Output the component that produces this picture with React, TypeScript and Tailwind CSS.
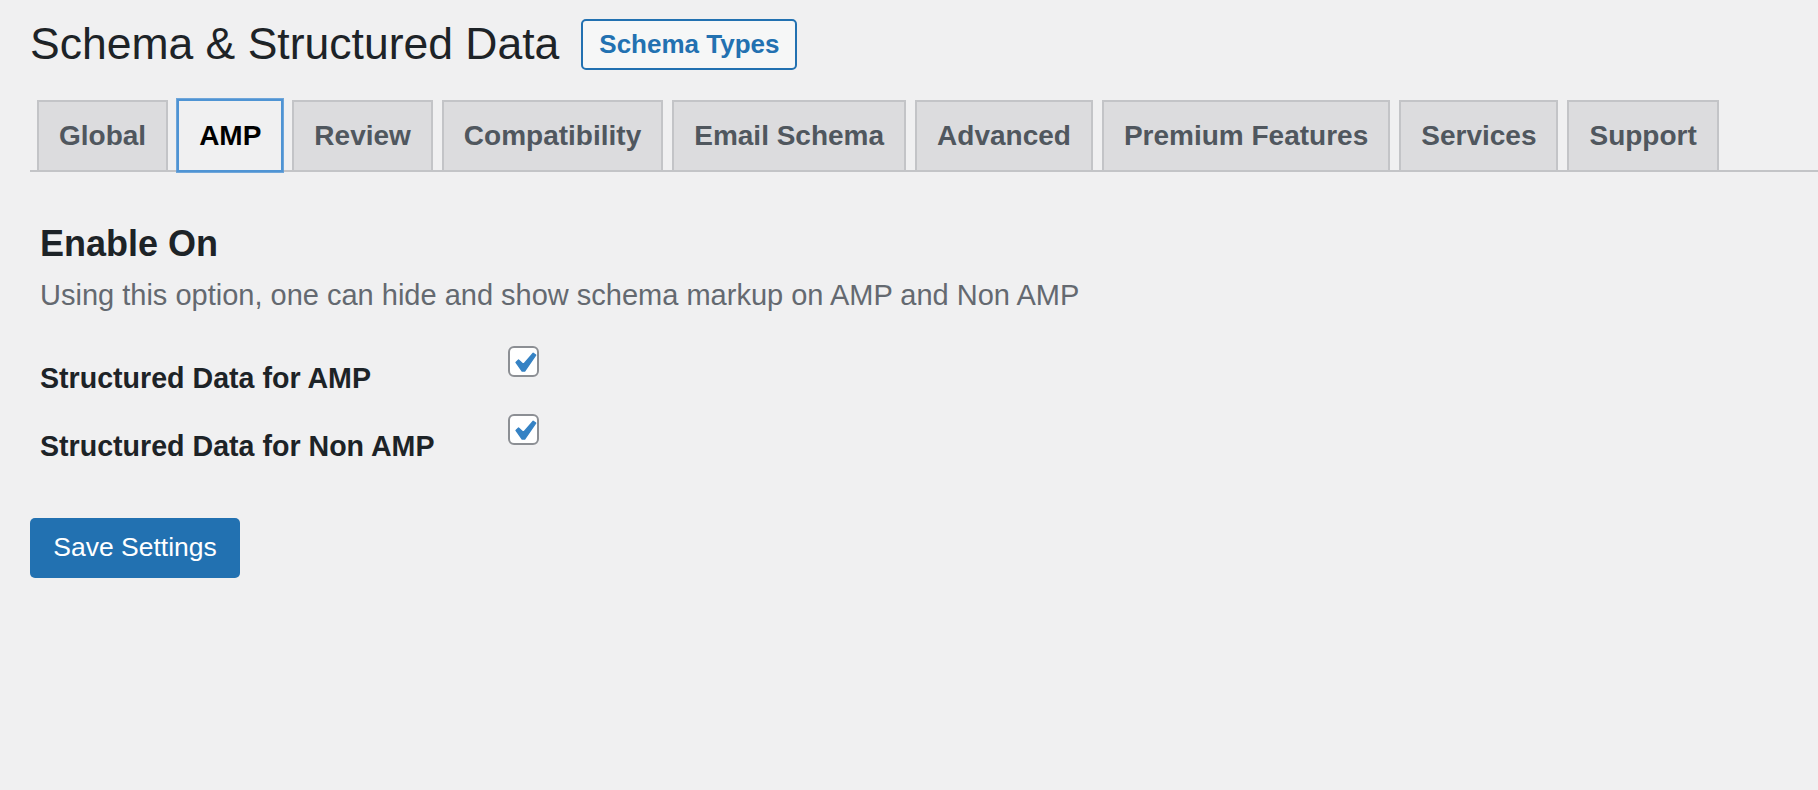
import React from 'react';

const tabs = ['Global', 'AMP', 'Review', 'Compatibility', 'Email Schema', 'Advanced', 'Premium Features', 'Services', 'Support'];

const font = { fontFamily: '"Liberation Sans", Arial, sans-serif' };

function Checkbox() {
  return (
    <div className="relative w-[31px] h-[31px] shrink-0 rounded-[6px] border-2 border-[#8c8f94] bg-white">
      <svg viewBox="0 0 20 20" className="absolute left-[-5px] top-[-4px] w-[38px] h-[38px]">
        <path
          d="M14.83 4.89l1.34.94-5.81 8.38H9.02L5.78 9.67l1.34-1.25 2.57 2.4z"
          fill="#3582c4"
          stroke="#3582c4"
          strokeWidth="0.7"
          strokeLinejoin="round"
        />
      </svg>
    </div>
  );
}

export default function App() {
  const active = 'AMP';

  return (
    <div className="min-h-[790px] w-full bg-[#f0f0f1] text-[#1d2327]" style={font}>
      <div className="pl-[30px] pt-[17px]">
        <div className="flex items-center gap-[22px]">
          <h1 className="text-[44.5px] leading-[54px] font-normal text-[#1d2327]">Schema &amp; Structured Data</h1>
          <button className="h-[51px] px-[16px] rounded-[5px] border-2 border-[#2271b1] bg-[#f6f7f7] text-[26px] font-semibold text-[#2271b1]">
            Schema Types
          </button>
        </div>

        <div className="mt-[28px] flex items-end gap-[9px] pl-[7px] border-b-2 border-[#c3c4c7]">
          {tabs.map(tab =>
            tab === active ? (
              <div
                key={tab}
                className="relative z-10 h-[73px] -mb-[2px] px-[20px] flex items-center border-2 border-[#4f94d4] shadow-[0_0_0_1px_rgba(79,148,212,0.8)] bg-[#f0f0f1] text-[28px] font-semibold text-black"
              >
                {tab}
              </div>
            ) : (
              <div
                key={tab}
                className="h-[70px] px-[20px] flex items-center border-2 border-b-0 border-[#c3c4c7] bg-[#dcdcde] text-[28px] font-semibold text-[#50575e]"
              >
                {tab}
              </div>
            )
          )}
        </div>

        <div className="pl-[10px]">
          <h2 className="mt-[50px] text-[36px] leading-[44px] font-semibold text-[#1d2327]">Enable On</h2>
          <p className="mt-[9px] text-[29px] leading-[40px] text-[#646970]">
            Using this option, one can hide and show schema markup on AMP and Non AMP
          </p>

          <div className="mt-[27px]">
            <div className="flex h-[68px]">
              <div className="w-[468px] mt-[16px] text-[28.6px] leading-[40px] font-semibold">Structured Data for AMP</div>
              <div className="mt-[4px]"><Checkbox /></div>
            </div>
            <div className="flex h-[68px]">
              <div className="w-[468px] mt-[16px] text-[28.6px] leading-[40px] font-semibold">Structured Data for Non AMP</div>
              <div className="mt-[4px]"><Checkbox /></div>
            </div>
          </div>
        </div>

        <button className="mt-[40px] h-[60px] w-[210px] rounded-[5px] bg-[#2271b1] text-[26.5px] text-white">
          Save Settings
        </button>
      </div>
    </div>
  );
}
